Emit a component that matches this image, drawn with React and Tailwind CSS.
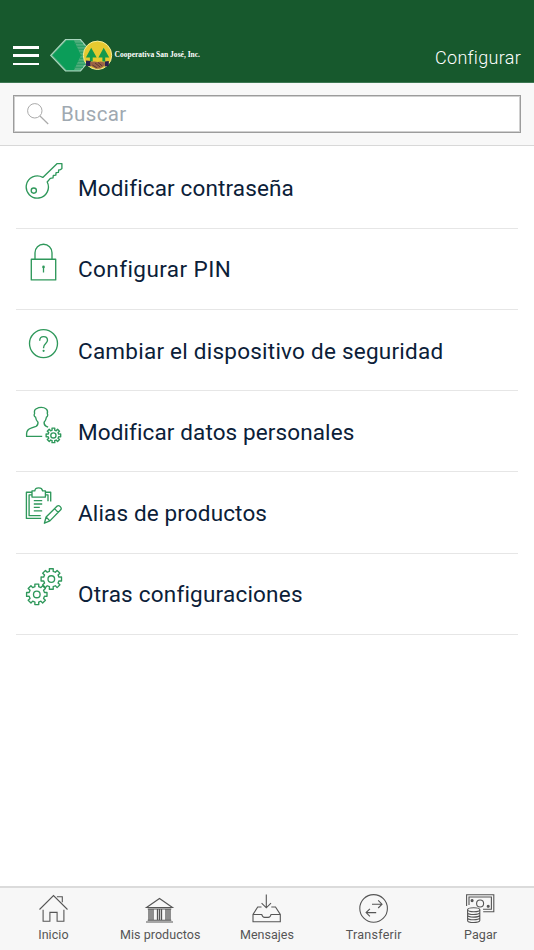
import React from "react";

// Outline of an eight-toothed cog centred on (cx, cy).
function gearPath(cx, cy, outer, inner) {
  const points = [];
  for (let i = 0; i < 8; i++) {
    const mid = (i * Math.PI) / 4;
    for (const [offset, radius] of [[-0.24, inner], [-0.19, outer], [0.19, outer], [0.24, inner]]) {
      const x = cx + radius * Math.sin(mid + offset);
      const y = cy - radius * Math.cos(mid + offset);
      points.push(`${x.toFixed(2)} ${y.toFixed(2)}`);
    }
  }
  return `M${points.join("L")}Z`;
}

function Gear({ cx, cy, outer, inner, hole }) {
  return (
    <>
      <path d={gearPath(cx, cy, outer, inner)} />
      <circle cx={cx} cy={cy} r={hole} />
    </>
  );
}

function RowIcon({ children }) {
  return (
    <svg className="h-[40px] w-[40px] shrink-0" viewBox="0 0 40 40" fill="none" stroke="#2f985b" strokeWidth="1.35" strokeLinejoin="round">
      {children}
    </svg>
  );
}

const KeyIcon = () => (
  <RowIcon>
    <path d="M17.8 16.4 32.2 2.6h4.7v4.8l-1.5 1.3-1.7.3-.3 2.3-2.3.4-.3 2.4-2.5.4-.3 2.4-2.7.5L22.2 21A11.1 11.1 0 1 1 17.8 16.4Z" />
    <circle cx="8.8" cy="29.6" r="2.6" />
  </RowIcon>
);

const LockIcon = () => (
  <RowIcon>
    <path d="M6.3 17.2h24.4v20.7H6.3zM10 17v-6.3a8.5 8.5 0 0 1 17 0V17" />
    <circle cx="18.5" cy="24.9" r="1.3" fill="#2f985b" stroke="none" />
    <path d="M18.5 25v5.5" strokeWidth="1.3" />
  </RowIcon>
);

const HelpIcon = () => (
  <RowIcon>
    <circle cx="18.5" cy="19.6" r="14" />
    <path d="M14.7 16.7c0-2.5 1.5-4.1 3.9-4.1 2.3 0 3.9 1.5 3.9 3.6 0 3.2-3.9 3.3-3.9 7.2v.9" />
    <circle cx="18.6" cy="26.8" r="1.1" fill="#2f985b" stroke="none" />
  </RowIcon>
);

const UserIcon = () => (
  <RowIcon>
    <path d="M17.2 31.4H1.6v-2.7c.1-3.2 1.5-4.5 4.4-5.5l5-1.9c1.7-.8 2.1-1.7 2-4.1-1.5-1.5-2.2-2.9-2.4-5-1.6-.8-1.8-2.4-1-3.7-.6-2.6.1-4 1.9-4.8 2.8-1.9 7.2-1.7 9.4 0 1.7 1.2 1.9 3 1.4 4.9.8 1.3.3 2.9-.9 3.6-.2 2-1 3.5-2.3 5-.1 2.2.4 3.4 2.2 4.2l1.8.8" />
    <Gear cx={28.4} cy={30.4} outer={7.4} inner={5.4} hole={2.6} />
  </RowIcon>
);

const ClipboardIcon = () => (
  <RowIcon>
    <path d="M7 6.2H1.4v26.2h14.8M7 8.9H4.1v20.8h11.6M20.3 6.2h5.4v9.4M20.3 8.9H23v6.3" />
    <path d="M7 4.8h2.8c.4-2.9 2.1-2.9 3.9-2.9s3.4.3 3.9 2.9h2.8v6.3H7zM8.8 14.6h8.4M8.8 18h8.4M8.8 21.4h6M8.8 24.8h8.4" />
    <path d="m19.4 37.2 1.7-6.2L32.2 20.1c1.8-1.4 5.2 1.6 3.5 3.7L24.9 34.9l-5.5 2.3ZM21.1 31l3.8 3.9M29.5 22.6l3.7 3.8" />
  </RowIcon>
);

const GearsIcon = () => (
  <RowIcon>
    <Gear cx={26.3} cy={12} outer={10.4} inner={7.9} hole={3.3} />
    <Gear cx={11.8} cy={27.4} outer={10.4} inner={7.9} hole={3.3} />
  </RowIcon>
);

const rows = [
  { label: "Modificar contraseña", Icon: KeyIcon, spacing: "tracking-[0.14px]" },
  { label: "Configurar PIN", Icon: LockIcon, spacing: "tracking-[0.43px]" },
  { label: "Cambiar el dispositivo de seguridad", Icon: HelpIcon, spacing: "tracking-[0.24px]" },
  { label: "Modificar datos personales", Icon: UserIcon, spacing: "tracking-[0.11px]" },
  { label: "Alias de productos", Icon: ClipboardIcon, spacing: "tracking-[0.14px]" },
  { label: "Otras configuraciones", Icon: GearsIcon, spacing: "tracking-[0.21px]" },
];

function TabIcon({ children }) {
  return (
    <svg className="h-[32px] w-[32px]" viewBox="0 0 32 32" fill="none" stroke="#565656" strokeWidth="1.1">
      {children}
    </svg>
  );
}

const tabs = [
  {
    label: "Inicio",
    spacing: "tracking-[0.05px]",
    icon: <path d="M2.5 17.5 16.5 3.5 30.5 17.5M6.1 17.8v11.4h6.8V20.4h7.2v8.8h6.8V17.8M19.9 4.8h5.4v5.5" />,
  },
  {
    label: "Mis productos",
    spacing: "tracking-[0.05px]",
    icon: (
      <>
        <path d="M2.5 15.5 15.5 6.5l13 9zM2 30h27M3.7 28.2h23.6M3.7 17h23.6" />
        <path d="M5 17v11M7 17v11M9 17v11M13.5 17v11M15.5 17v11M17.5 17v11M22 17v11M24 17v11M26 17v11" strokeWidth="1.3" />
      </>
    ),
  },
  {
    label: "Mensajes",
    spacing: "tracking-[0.02px]",
    icon: (
      <path d="M15.3 2.5v13M10.6 11.2l4.7 4.6 4.7-4.6M10.5 15H6.7L2 22.5v7.2h27.3v-7.2L24.5 15h-4.2M2 22.5h8.8c.4 1.9 1.3 2.9 2.8 2.9h3.6c1.5 0 2.4-1 2.8-2.9h9.3" />
    ),
  },
  {
    label: "Transferir",
    spacing: "tracking-[0.25px]",
    icon: (
      <>
        <circle cx="15.6" cy="16.4" r="13.8" />
        <path d="M14 12.2h9.7M20.2 8.4l3.8 3.8-3.8 3.8M18.2 20.6H8.1M11.9 16.8l-3.8 3.8 3.8 3.8" />
      </>
    ),
  },
  {
    label: "Pagar",
    spacing: "tracking-[0.1px]",
    icon: (
      <>
        <path d="M1.6 14V2.7h27.2v17H18.2M4 13V5h22.4v12.2H18" />
        <circle cx="15.1" cy="11.5" r="3.5" />
        <circle cx="7.1" cy="8.6" r="1" fill="#565656" />
        <circle cx="23.2" cy="14.3" r="1" fill="#565656" />
        <ellipse cx="8.7" cy="17.8" rx="6.1" ry="2" />
        <path d="M2.6 17.8v10.6c0 2.7 12.2 2.7 12.2 0V17.8M2.6 20.5c0 2.7 12.2 2.7 12.2 0M2.6 23.1c0 2.7 12.2 2.7 12.2 0M2.6 25.7c0 2.7 12.2 2.7 12.2 0" />
      </>
    ),
  },
];

function Logo() {
  return (
    <svg className="h-[36px] w-[154px]" viewBox="0 0 154 36">
      <path d="M.7 18.3 15.5 2.5h15l13 15.8-13 15.7h-15z" fill="#4fae7c" stroke="#a8d5bd" strokeWidth="1.2" />
      <path d="M2.5 18.3 16.5 3.5H24l7 14.8-7 14.7h-7.5z" fill="#0b9d59" />
      <path d="M24 6.2h9M26 9.2h10M28 12.2h11M30 15.2h11M31 18.2h12M30 21.2h12M28 24.2h11M26 27.2h10M24 30.2h9" stroke="#239a60" strokeWidth="1.1" />
      <circle cx="47.5" cy="18.3" r="14.2" fill="#e6ca30" stroke="#f5eb98" strokeWidth="1" />
      <path d="m41.2 10.8 5.5 9.8h-4v4h-2.8v-4h-4zM53.7 10.8l5.5 9.8h-4v4h-2.8v-4h-4z" fill="#13994c" />
      <path d="m36 23.5 4.8.5v5.2l-4.8-.5zM58.8 24l-4 .5v5l4-.5z" fill="#29214e" />
      <path d="m40.3 25 4-.5 3.5.6 3-.7 4 1v3.2l-4.5 2.8-4.3.3-5.7-3.1z" fill="#9b6347" />
      <path d="m45 26 5 3.8M48 25.5l4.3 3.5M42.3 28l4.5 2.7" stroke="#402827" strokeWidth=".7" />
      <text x="64.5" y="20.4" fontSize="8" fontWeight="bold" fontFamily="Liberation Serif, serif" fill="#fff" textLength="85.5" lengthAdjust="spacingAndGlyphs">
        Cooperativa San José, Inc.
      </text>
    </svg>
  );
}

export default function App() {
  return (
    <div className="flex h-[950px] w-[534px] flex-col overflow-hidden bg-white font-['Roboto',sans-serif]">
      <header className="flex h-[83px] shrink-0 items-end border-b border-[#3e7853] bg-[#17592d] pr-[13px] pl-[13px]">
        <button aria-label="Menú" className="mb-[17px] flex h-[19px] w-[26px] flex-col justify-between">
          <span className="h-[2.5px] w-full bg-white" />
          <span className="h-[2.5px] w-full bg-white" />
          <span className="h-[2.5px] w-full bg-white" />
        </button>
        <div className="mb-[9px] ml-[11px]"><Logo /></div>
        <h1 className="mb-[11px] ml-auto text-[18px] leading-[26px] font-light tracking-[0.3px] text-white">Configurar</h1>
      </header>

      <div className="h-[63px] shrink-0 border-b border-[#d8d8d8] bg-[#f8f8f8] px-[13px] pt-[12px]">
        <div className="flex h-[38px] items-center border border-[#9c9c9c] bg-white pl-[12px] shadow-[inset_0_0_0_1px_#d0d0d0]">
          <svg className="h-[24px] w-[24px]" viewBox="0 0 24 24" fill="none" stroke="#aaa" strokeWidth="1">
            <circle cx="8.8" cy="8.8" r="7.2" />
            <path d="m14 14 8.2 8" strokeWidth="1.2" />
          </svg>
          <span className="ml-[11px] text-[20.5px] tracking-[0.35px] text-[#a0a9b1]">Buscar</span>
        </div>
      </div>

      <main className="flex-1 px-[16px]">
        {rows.map(({ label, Icon, spacing }) => (
          <div key={label} className="flex h-[81.25px] items-end border-b-[1.5px] border-[#e6e6e6] pb-[24.5px] pl-[9px] first:h-[82.5px]">
            <div className="mb-[2px]"><Icon /></div>
            <span className={`ml-[13px] text-[22.5px] leading-[30px] whitespace-nowrap text-[#0b2038] ${spacing}`}>{label}</span>
          </div>
        ))}
      </main>

      <nav className="grid h-[64px] shrink-0 grid-cols-5 border-t-2 border-[#dbdbdb] bg-[#f7f7f7]">
        {tabs.map(({ label, icon, spacing }) => (
          <div key={label} className="flex flex-col items-center pt-[4px]">
            <TabIcon>{icon}</TabIcon>
            <span className={`mt-[3px] text-[12.5px] leading-[16px] whitespace-nowrap text-[#555] ${spacing}`}>{label}</span>
          </div>
        ))}
      </nav>
    </div>
  );
}
